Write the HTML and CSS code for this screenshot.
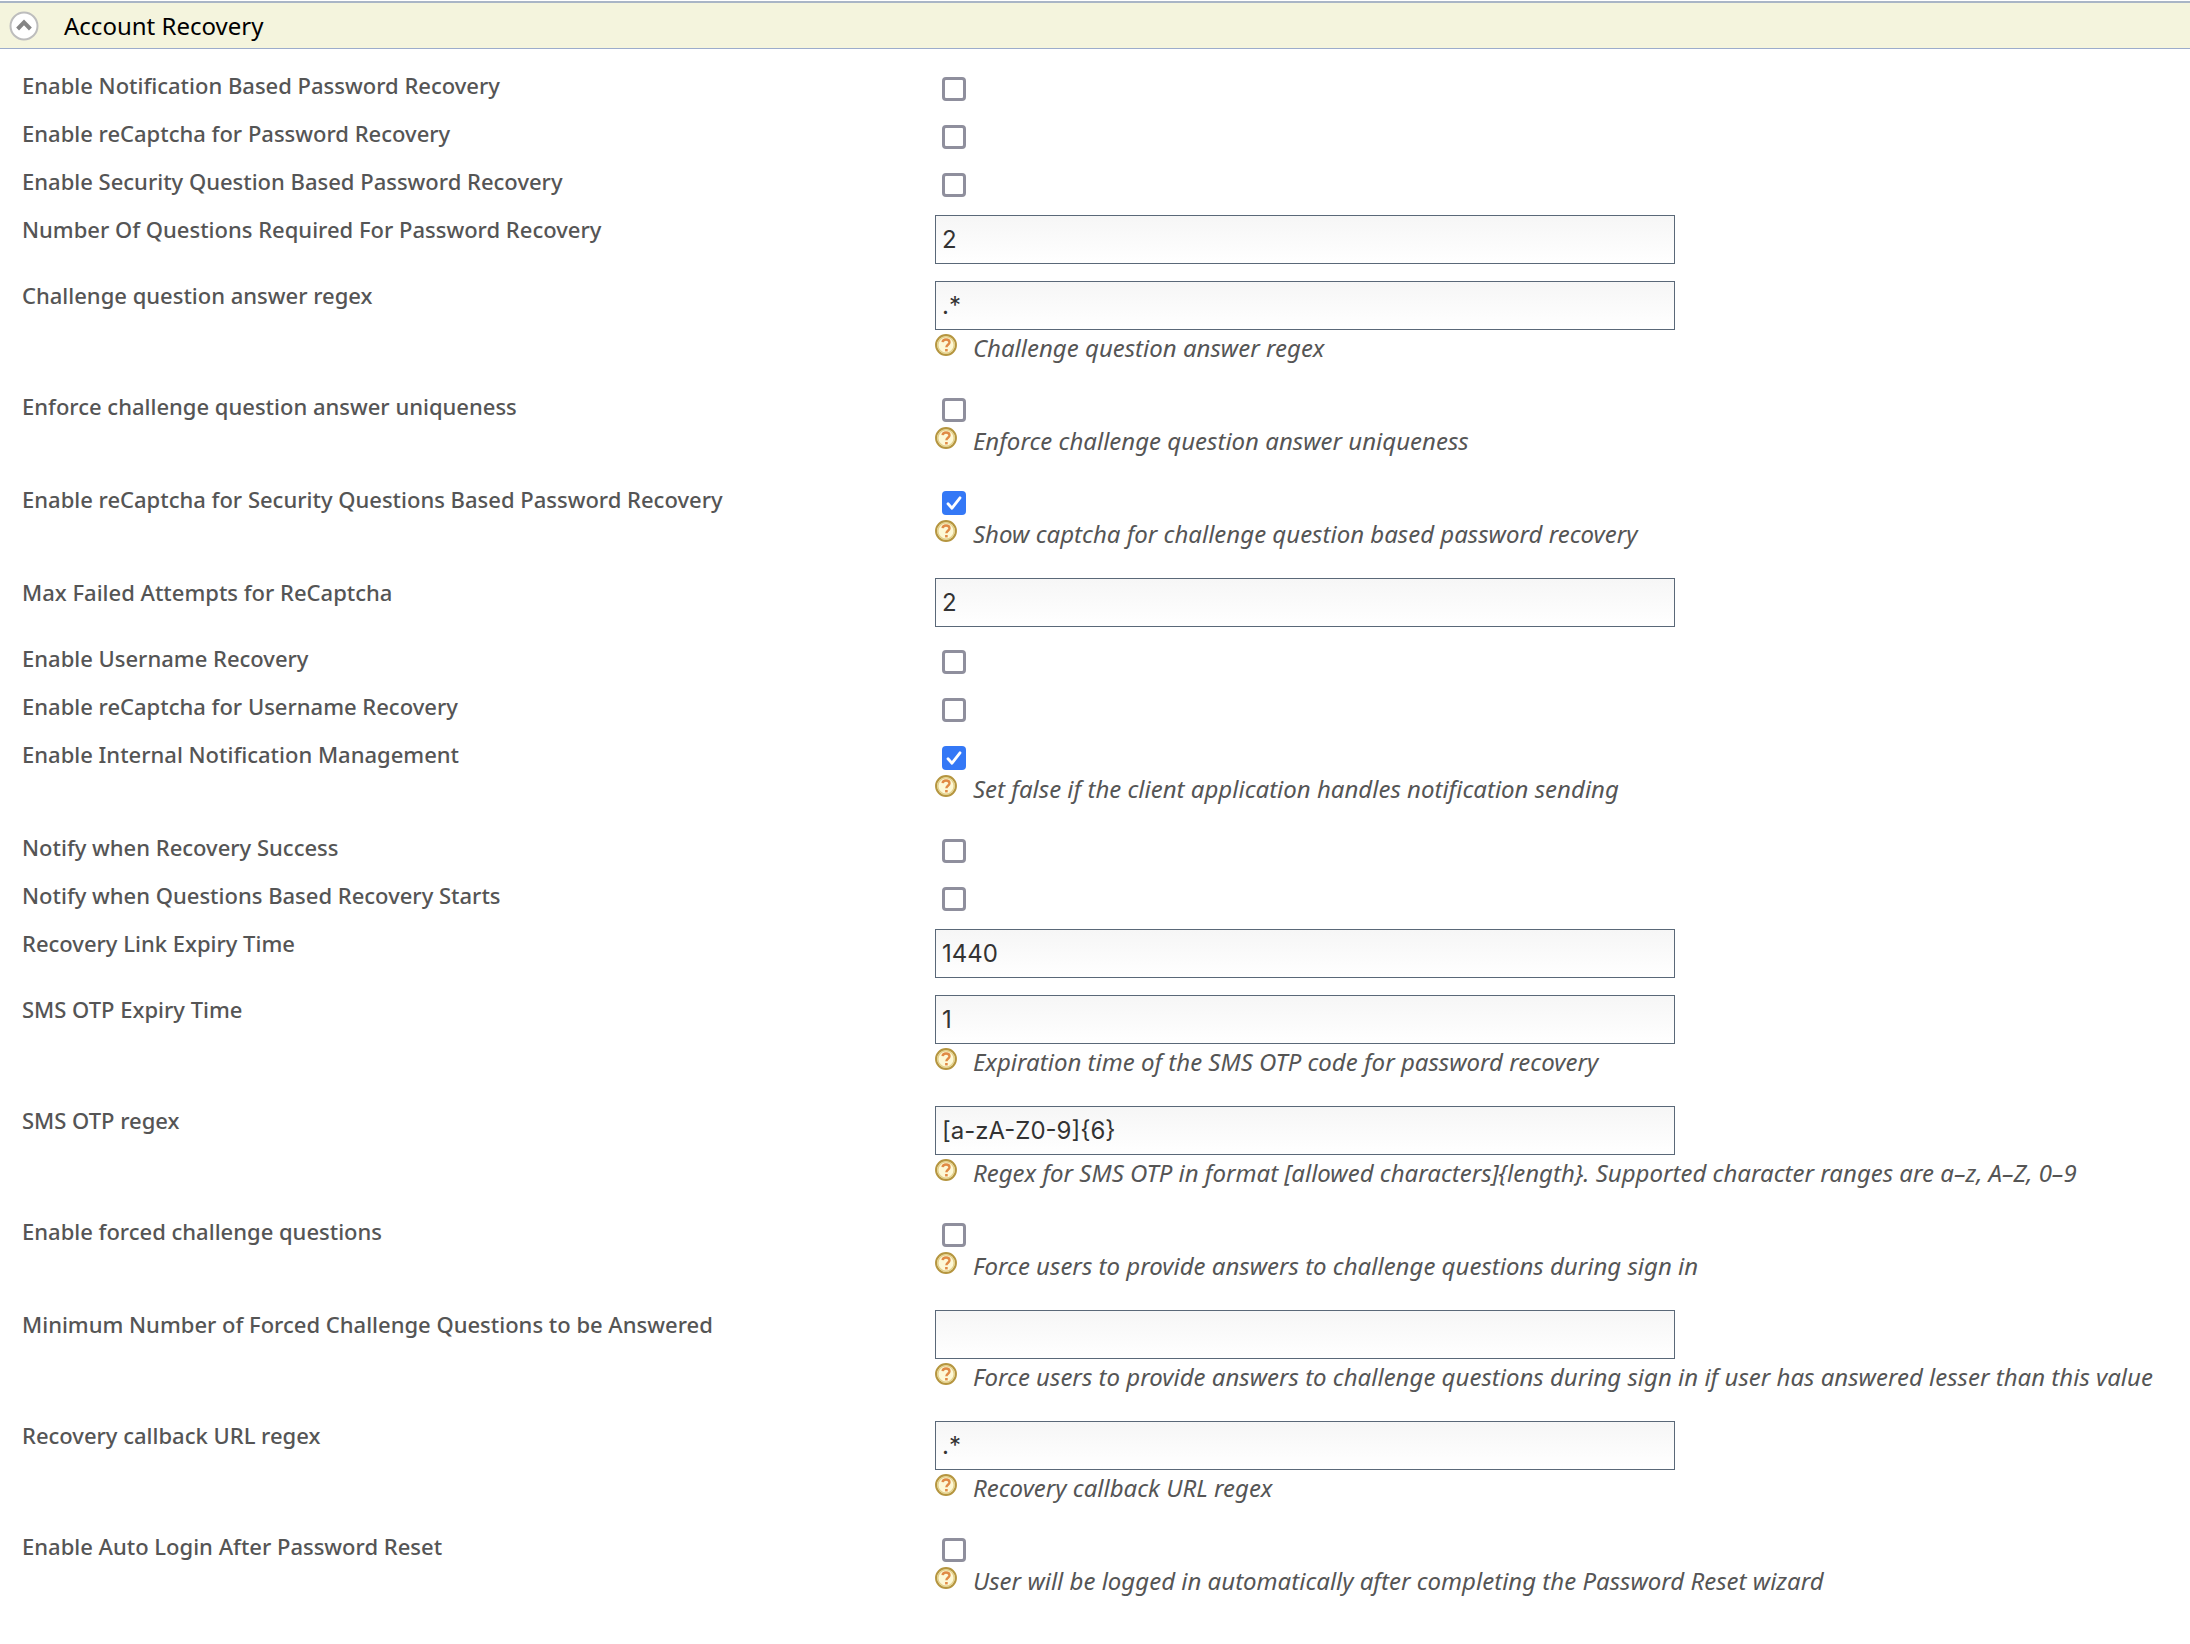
FILE: index.html
```html
<!DOCTYPE html>
<html lang="en">
<head>
<meta charset="utf-8">
<title>Account Recovery</title>
<link rel="stylesheet" href="styles.css">
</head>
<body>
<svg class="defs" width="0" height="0" aria-hidden="true">
  <symbol id="help" viewBox="0 0 22 22">
    <circle cx="11" cy="11" r="9.9" fill="#fdf8d6" stroke="#b5953f" stroke-width="2.1"/>
    <circle cx="11" cy="11" r="8.2" fill="none" stroke="#e3d08c" stroke-width="1.4"/>
    <path d="M7.6 8.2C7.8 6.3 9.2 5.5 11 5.5c2.1 0 3.5 1 3.5 2.8 0 2.5-3.1 2.5-3.1 5" fill="none" stroke="#e08a45" stroke-width="2.4"/>
    <path d="M10.1 15h2.6v2.4h-2.6z" fill="#e08a45"/>
  </symbol>
</svg>
<header class="section-head">
  <button class="toggle" type="button" aria-label="Collapse" aria-expanded="true">
    <svg viewBox="0 0 30 30" width="30" height="30" aria-hidden="true">
      <circle cx="15" cy="15" r="13.5" fill="#fff" stroke="#bdbdbd" stroke-width="2"/>
      <path d="M8.6 18 15 11.4l6.4 6.6" fill="none" stroke="#858585" stroke-width="4"/>
    </svg>
  </button>
  <h2 class="section-title">Account Recovery</h2>
</header>
<form class="settings">
  <div class="row"><label class="name" for="f1">Enable Notification Based Password Recovery</label><div class="value"><input class="check" type="checkbox" id="f1"></div></div>
  <div class="row"><label class="name" for="f2">Enable reCaptcha for Password Recovery</label><div class="value"><input class="check" type="checkbox" id="f2"></div></div>
  <div class="row"><label class="name" for="f3">Enable Security Question Based Password Recovery</label><div class="value"><input class="check" type="checkbox" id="f3"></div></div>
  <div class="row"><label class="name" for="f4">Number Of Questions Required For Password Recovery</label><div class="value"><input class="field" type="text" id="f4" value="2"></div></div>
  <div class="row"><label class="name" for="f5">Challenge question answer regex</label><div class="value"><input class="field" type="text" id="f5" value=".*"><p class="hint"><svg class="help"><use href="#help"/></svg><span>Challenge question answer regex</span></p></div></div>
  <div class="row"><label class="name" for="f6">Enforce challenge question answer uniqueness</label><div class="value"><input class="check" type="checkbox" id="f6"><p class="hint"><svg class="help"><use href="#help"/></svg><span>Enforce challenge question answer uniqueness</span></p></div></div>
  <div class="row"><label class="name" for="f7">Enable reCaptcha for Security Questions Based Password Recovery</label><div class="value"><input class="check" type="checkbox" id="f7" checked><p class="hint"><svg class="help"><use href="#help"/></svg><span>Show captcha for challenge question based password recovery</span></p></div></div>
  <div class="row"><label class="name" for="f8">Max Failed Attempts for ReCaptcha</label><div class="value"><input class="field" type="text" id="f8" value="2"></div></div>
  <div class="row"><label class="name" for="f9">Enable Username Recovery</label><div class="value"><input class="check" type="checkbox" id="f9"></div></div>
  <div class="row"><label class="name" for="f10">Enable reCaptcha for Username Recovery</label><div class="value"><input class="check" type="checkbox" id="f10"></div></div>
  <div class="row"><label class="name" for="f11">Enable Internal Notification Management</label><div class="value"><input class="check" type="checkbox" id="f11" checked><p class="hint"><svg class="help"><use href="#help"/></svg><span>Set false if the client application handles notification sending</span></p></div></div>
  <div class="row"><label class="name" for="f12">Notify when Recovery Success</label><div class="value"><input class="check" type="checkbox" id="f12"></div></div>
  <div class="row"><label class="name" for="f13">Notify when Questions Based Recovery Starts</label><div class="value"><input class="check" type="checkbox" id="f13"></div></div>
  <div class="row"><label class="name" for="f14">Recovery Link Expiry Time</label><div class="value"><input class="field" type="text" id="f14" value="1440"></div></div>
  <div class="row"><label class="name" for="f15">SMS OTP Expiry Time</label><div class="value"><input class="field" type="text" id="f15" value="1"><p class="hint"><svg class="help"><use href="#help"/></svg><span>Expiration time of the SMS OTP code for password recovery</span></p></div></div>
  <div class="row"><label class="name" for="f16">SMS OTP regex</label><div class="value"><input class="field" type="text" id="f16" value="[a-zA-Z0-9]{6}"><p class="hint"><svg class="help"><use href="#help"/></svg><span>Regex for SMS OTP in format [allowed characters]{length}. Supported character ranges are a–z, A–Z, 0–9</span></p></div></div>
  <div class="row"><label class="name" for="f17">Enable forced challenge questions</label><div class="value"><input class="check" type="checkbox" id="f17"><p class="hint"><svg class="help"><use href="#help"/></svg><span>Force users to provide answers to challenge questions during sign in</span></p></div></div>
  <div class="row"><label class="name" for="f18">Minimum Number of Forced Challenge Questions to be Answered</label><div class="value"><input class="field" type="text" id="f18" value=""><p class="hint"><svg class="help"><use href="#help"/></svg><span>Force users to provide answers to challenge questions during sign in if user has answered lesser than this value</span></p></div></div>
  <div class="row"><label class="name" for="f19">Recovery callback URL regex</label><div class="value"><input class="field" type="text" id="f19" value=".*"><p class="hint"><svg class="help"><use href="#help"/></svg><span>Recovery callback URL regex</span></p></div></div>
  <div class="row"><label class="name" for="f20">Enable Auto Login After Password Reset</label><div class="value"><input class="check" type="checkbox" id="f20"><p class="hint"><svg class="help"><use href="#help"/></svg><span>User will be logged in automatically after completing the Password Reset wizard</span></p></div></div>
</form>
</body>
</html>
```
FILE: styles.css
```css
* { box-sizing: border-box; }

body {
  margin: 0;
  background: #fff;
  color: #555;
  font-family: "Noto Sans", "Open Sans", sans-serif;
  font-size: 22px;
  line-height: 28px;
}

.defs { display: block; }

.section-head {
  display: flex;
  align-items: center;
  gap: 25px;
  height: 48px;
  margin-top: 1px;
  padding-left: 9px;
  background: #f4f4dd;
  border-top: 2px solid #a9b5c6;
  border-bottom: 1px solid #9caccb;
}

.toggle {
  width: 30px;
  height: 30px;
  padding: 0;
  border: 0;
  background: none;
}

.toggle svg { display: block; }

.section-title {
  margin: 0;
  color: #000;
  font-size: 24px;
  font-weight: 400;
}

.settings { padding: 12px 0 0 22px; }

.row {
  display: grid;
  grid-template-columns: 913fr 1255fr;
  align-items: start;
}

.name {
  padding-top: 10px;
  font-weight: 500;
}

.check {
  display: block;
  appearance: none;
  width: 24px;
  height: 24px;
  margin: 16px 0 8px 7px;
  border: 3px solid #8f8f9d;
  border-radius: 4px;
  background: #fff;
}

.check:checked {
  border-width: 0;
  background: #3478f6 url("data:image/svg+xml,%3Csvg xmlns='http://www.w3.org/2000/svg' viewBox='0 0 24 24'%3E%3Cpath d='M6 12.8l4 4.4 8-10.4' fill='none' stroke='white' stroke-width='2.8' stroke-linecap='round' stroke-linejoin='round'/%3E%3C/svg%3E") center / 24px 24px no-repeat;
}

.field {
  display: block;
  width: 740px;
  height: 49px;
  margin: 10px 0 7px;
  padding: 0 6px;
  border: 1px solid #5a6878;
  background: linear-gradient(#f6f6f6, #fff);
  color: #333;
  font-family: Inter, sans-serif;
  font-size: 24px;
}

.hint {
  display: flex;
  gap: 16px;
  margin: 0 0 20px;
  font-size: 24px;
  font-style: italic;
}

.check + .hint,
.field + .hint { margin-top: -3px; }

.help {
  flex: none;
  width: 22px;
  height: 22px;
}
```
